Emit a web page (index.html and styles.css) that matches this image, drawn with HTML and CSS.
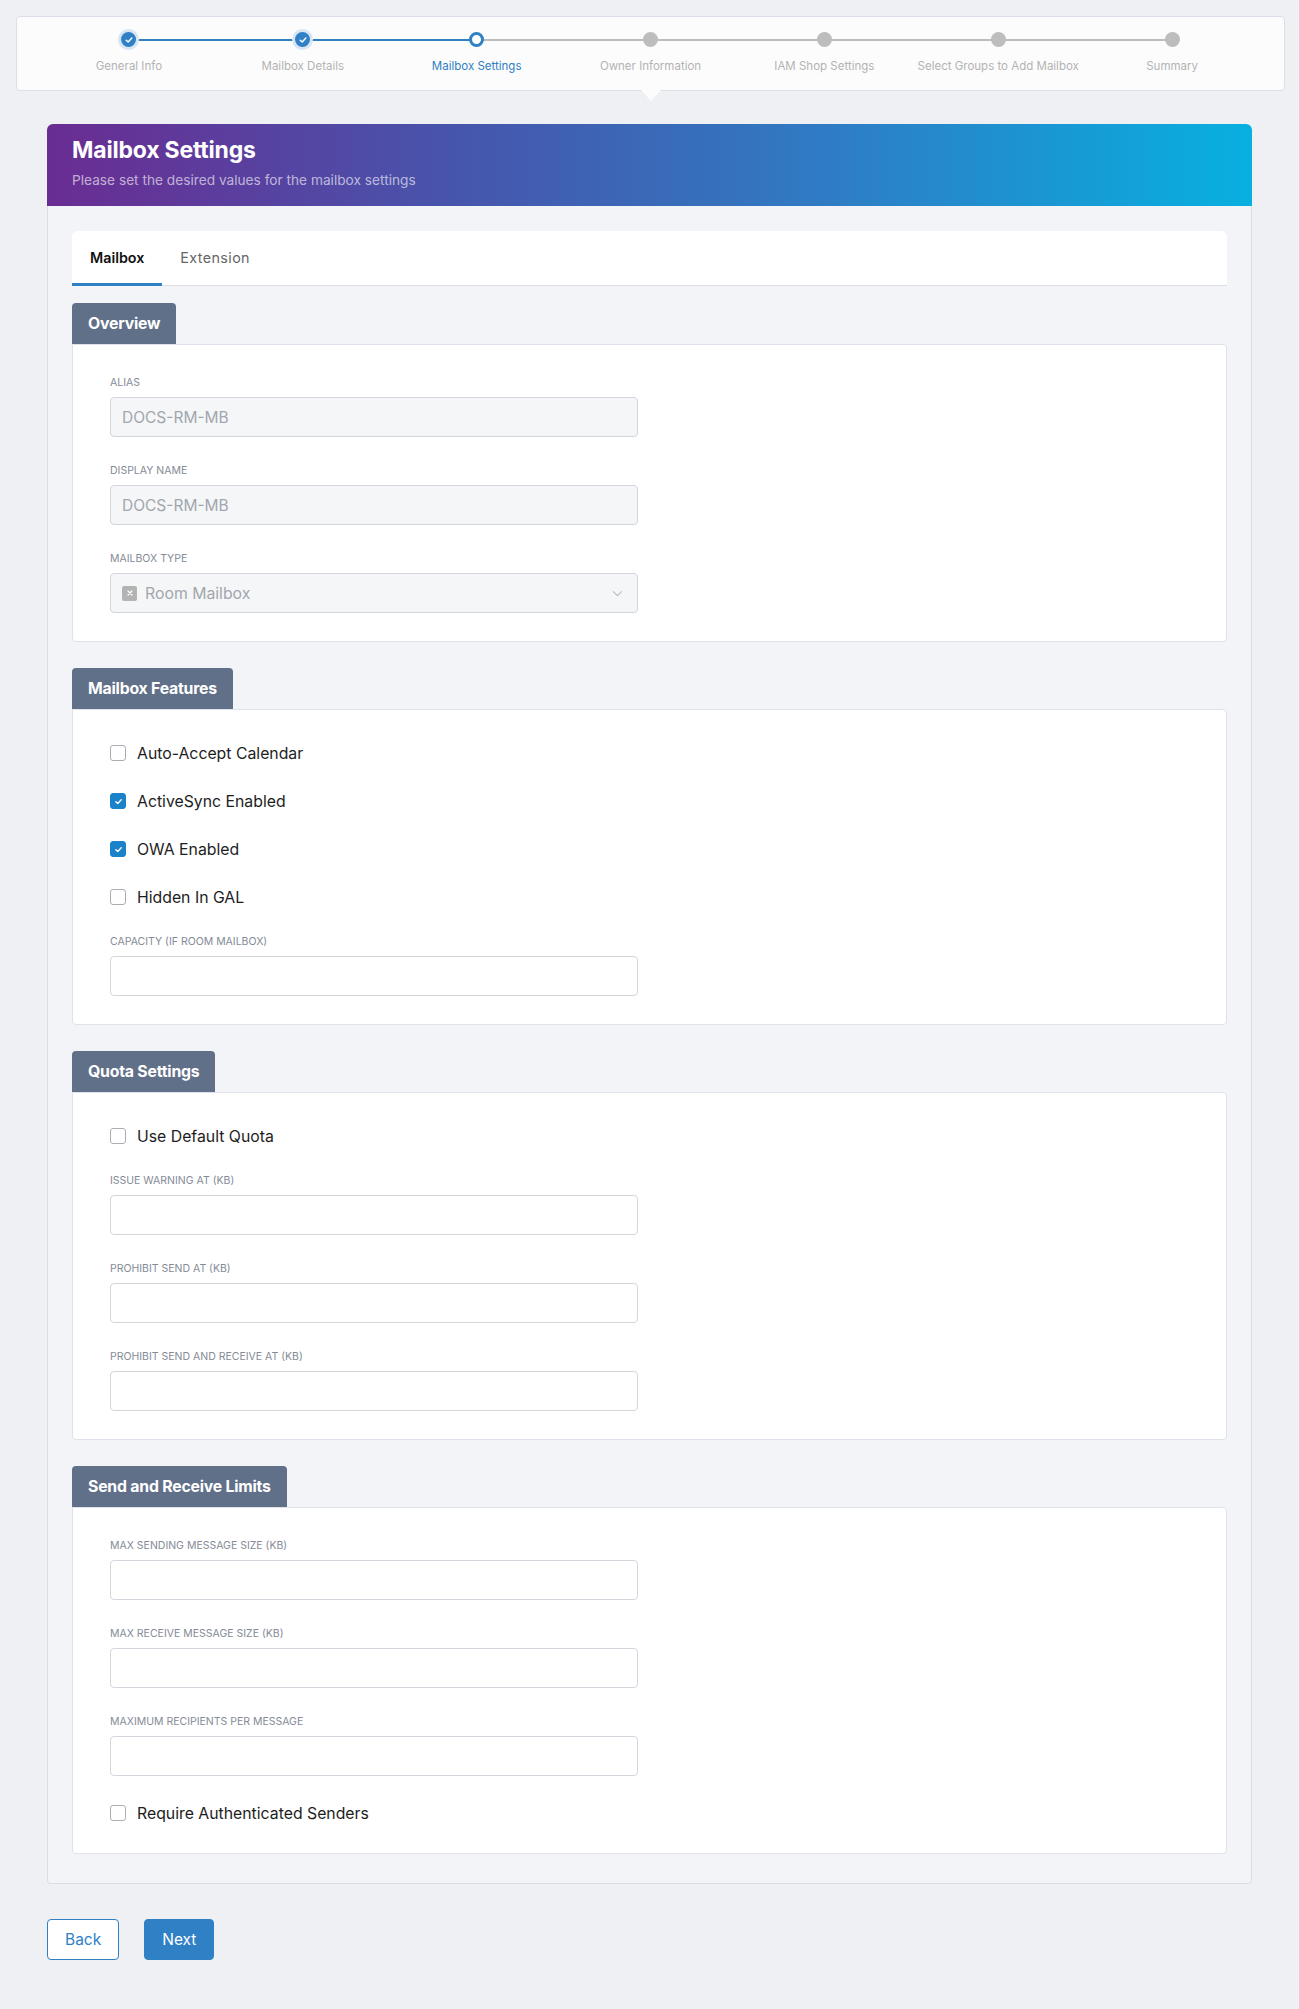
FILE: index.html
```html
<!DOCTYPE html>
<html lang="en">
<head>
    <meta charset="UTF-8">
    <meta name="viewport" content="width=device-width, initial-scale=1.0">
    <title>New Mailbox - Mailbox Settings</title>
    <link rel="stylesheet" href="styles.css">
</head>
<body>

    <!-- wizard steps -->
    <div class="stepper">
        <div class="step done">
            <span class="dot"><svg viewBox="0 0 10 10" width="8" height="8"><polyline points="1.5,5.2 4,7.5 8.5,2.5" fill="none" stroke="#fff" stroke-width="1.8" stroke-linecap="round" stroke-linejoin="round"/></svg></span>
            <span class="step-name">General Info</span>
        </div>
        <div class="step done">
            <span class="dot"><svg viewBox="0 0 10 10" width="8" height="8"><polyline points="1.5,5.2 4,7.5 8.5,2.5" fill="none" stroke="#fff" stroke-width="1.8" stroke-linecap="round" stroke-linejoin="round"/></svg></span>
            <span class="step-name">Mailbox Details</span>
        </div>
        <div class="step active">
            <span class="dot"></span>
            <span class="step-name">Mailbox Settings</span>
        </div>
        <div class="step">
            <span class="dot"></span>
            <span class="step-name">Owner Information</span>
        </div>
        <div class="step">
            <span class="dot"></span>
            <span class="step-name">IAM Shop Settings</span>
        </div>
        <div class="step">
            <span class="dot"></span>
            <span class="step-name">Select Groups to Add Mailbox</span>
        </div>
        <div class="step">
            <span class="dot"></span>
            <span class="step-name">Summary</span>
        </div>
    </div>

    <div class="panel">
        <div class="panel-head">
            <h1>Mailbox Settings</h1>
            <p>Please set the desired values for the mailbox settings</p>
        </div>

        <div class="panel-body">
            <div class="tabs">
                <span class="tab current">Mailbox</span>
                <span class="tab">Extension</span>
            </div>

            <!-- overview -->
            <div class="section">
                <div class="section-title">Overview</div>
                <div class="section-box">
                    <div class="field">
                        <label>Alias</label>
                        <input class="text" type="text" value="DOCS-RM-MB" disabled>
                    </div>
                    <div class="field">
                        <label>Display Name</label>
                        <input class="text" type="text" value="DOCS-RM-MB" disabled>
                    </div>
                    <div class="field">
                        <label>Mailbox Type</label>
                        <div class="select">
                            <span class="clear"><svg viewBox="0 0 10 10" width="8" height="8"><path d="M2.5 2.5 L7.5 7.5 M7.5 2.5 L2.5 7.5" stroke="#fff" stroke-width="1.6" stroke-linecap="round"/></svg></span>
                            <span class="select-value">Room Mailbox</span>
                            <svg class="chevron" viewBox="0 0 12 8" width="11" height="7"><polyline points="1,1.5 6,6.5 11,1.5" fill="none" stroke="#b9bdc4" stroke-width="1.2"/></svg>
                        </div>
                    </div>
                </div>
            </div>

            <!-- features -->
            <div class="section">
                <div class="section-title">Mailbox Features</div>
                <div class="section-box">
                    <div class="check"><span class="box"></span>Auto-Accept Calendar</div>
                    <div class="check"><span class="box on"><svg viewBox="0 0 10 10" width="9" height="9"><polyline points="2,5.3 4.2,7.3 8,3" fill="none" stroke="#fff" stroke-width="1.5" stroke-linecap="round" stroke-linejoin="round"/></svg></span>ActiveSync Enabled</div>
                    <div class="check"><span class="box on"><svg viewBox="0 0 10 10" width="9" height="9"><polyline points="2,5.3 4.2,7.3 8,3" fill="none" stroke="#fff" stroke-width="1.5" stroke-linecap="round" stroke-linejoin="round"/></svg></span>OWA Enabled</div>
                    <div class="check"><span class="box"></span>Hidden In GAL</div>
                    <div class="field">
                        <label>Capacity (if room mailbox)</label>
                        <input class="text" type="text">
                    </div>
                </div>
            </div>

            <!-- quota -->
            <div class="section">
                <div class="section-title">Quota Settings</div>
                <div class="section-box">
                    <div class="check"><span class="box"></span>Use Default Quota</div>
                    <div class="field">
                        <label>Issue warning at (KB)</label>
                        <input class="text" type="text">
                    </div>
                    <div class="field">
                        <label>Prohibit send at (KB)</label>
                        <input class="text" type="text">
                    </div>
                    <div class="field">
                        <label>Prohibit send and receive at (KB)</label>
                        <input class="text" type="text">
                    </div>
                </div>
            </div>

            <!-- limits -->
            <div class="section">
                <div class="section-title">Send and Receive Limits</div>
                <div class="section-box">
                    <div class="field">
                        <label>Max sending message size (KB)</label>
                        <input class="text" type="text">
                    </div>
                    <div class="field">
                        <label>Max receive message size (KB)</label>
                        <input class="text" type="text">
                    </div>
                    <div class="field">
                        <label>Maximum recipients per message</label>
                        <input class="text" type="text">
                    </div>
                    <div class="check"><span class="box"></span>Require Authenticated Senders</div>
                </div>
            </div>
        </div>
    </div>

    <div class="actions">
        <button class="btn btn-line">Back</button>
        <button class="btn btn-fill">Next</button>
    </div>

</body>
</html>
```

FILE: styles.css
```css
body{
    margin: 0;
    background: #eef0f4;
    font-family: Inter, "Noto Sans", sans-serif;
    color: #222;
}

/* ---------- wizard steps ---------- */
.stepper{
    position: relative;
    display: flex;
    margin: 16px 14px 0 16px;
    padding: 0 25px;
    height: 73px;
    background: #fcfcfd;
    border: 1px solid #dcdfe8;
    border-radius: 4px;
}
/* small pointer under the card */
.stepper::after{
    content: "";
    position: absolute;
    left: 50%;
    bottom: -11px;
    margin-left: -10px;
    border-left: 10px solid transparent;
    border-right: 10px solid transparent;
    border-top: 11px solid #fcfcfd;
}
.step{
    position: relative;
    flex: 1;
    display: flex;
    flex-direction: column;
    align-items: center;
    padding-top: 15px;
}
.step::before{
    content: "";
    position: absolute;
    top: 22px;
    left: -50%;
    right: 50%;
    height: 2px;
    background: #bdbdbd;
}
.step:first-child::before{ display: none; }
.step.done::before,
.step.active::before{ background: #2f80c5; }

.dot{
    position: relative;
    z-index: 1;
    width: 15px;
    height: 15px;
    border-radius: 50%;
    background: #bdbdbd;
    box-sizing: border-box;
    display: flex;
    align-items: center;
    justify-content: center;
}
.done .dot{
    background: #2f80c5;
    box-shadow: 0 0 0 3px #d8e6f4;
}
.active .dot{
    background: #fff;
    border: 3px solid #2f80c5;
}
.step-name{
    margin-top: 12px;
    font-size: 11.5px;
    color: #b3b3b3;
    white-space: nowrap;
}
.active .step-name{ color: #2f80c5; }

/* ---------- main panel ---------- */
.panel{
    margin: 33px 47px 0 47px;
    border-radius: 6px 6px 4px 4px;
}
.panel-head{
    padding: 11px 25px 17px;
    border-radius: 6px 6px 0 0;
    background: linear-gradient(to right, #6a2c92 0%, #4656ad 35%, #2f7cc4 65%, #07b0e0 100%);
}
.panel-head h1{
    margin: 0;
    font-size: 23px;
    line-height: 30px;
    font-weight: 700;
    color: #fff;
    letter-spacing: -0.2px;
}
.panel-head p{
    margin: 6px 0 0;
    font-size: 13.7px;
    line-height: 18px;
    color: rgba(255, 255, 255, 0.62);
}
.panel-body{
    padding: 25px 24px 29px;
    background: #f3f4f7;
    border: 1px solid #dadde7;
    border-top: 0;
    border-radius: 0 0 4px 4px;
}

/* tabs */
.tabs{
    display: flex;
    height: 54px;
    background: #fff;
    border-bottom: 1px solid #dcdfe6;
    border-radius: 6px 6px 0 0;
}
.tab{
    display: flex;
    align-items: center;
    padding: 0 18px;
    font-size: 14.3px;
    color: #666;
    letter-spacing: 0.4px;
    border-bottom: 3px solid transparent;
    margin-bottom: -1px;
}
.tab.current{
    color: #111;
    font-weight: 600;
    letter-spacing: 0;
    border-bottom-color: #2f80c5;
}

/* sections */
.section{ margin-top: 26px; }
.tabs + .section{ margin-top: 17px; }
.section-title{
    display: inline-block;
    padding: 0 16px;
    height: 41px;
    line-height: 41px;
    background: #617089;
    color: #fff;
    font-size: 15.8px;
    font-weight: 700;
    letter-spacing: -0.2px;
    border-radius: 4px 4px 0 0;
    vertical-align: top;
}
.section-box{
    padding: 31px 37px 28px;
    background: #fff;
    border: 1px solid #dfe2ea;
    border-radius: 0 4px 4px 4px;
}

.field + .field{ margin-top: 27px; }
.field label{
    display: block;
    margin-bottom: 7px;
    font-size: 10.5px;
    line-height: 14px;
    color: #858b96;
    text-transform: uppercase;
}
.text{
    display: block;
    width: 528px;
    height: 40px;
    box-sizing: border-box;
    padding: 0 11px;
    border: 1px solid #d3d6dc;
    border-radius: 4px;
    background: #fff;
    font-family: inherit;
    font-size: 15.5px;
    color: #222;
}
.text:disabled{
    background: #f5f6f8;
    color: #a2a6ad;
}

.select{
    display: flex;
    align-items: center;
    width: 528px;
    height: 40px;
    box-sizing: border-box;
    padding: 0 14px 0 11px;
    border: 1px solid #d3d6dc;
    border-radius: 4px;
    background: #f5f6f8;
}
.clear{
    width: 15px;
    height: 15px;
    border-radius: 2px;
    background: #b3b3b3;
    display: flex;
    align-items: center;
    justify-content: center;
}
.select-value{
    flex: 1;
    margin-left: 8px;
    font-size: 15.8px;
    color: #a2a6ad;
}

/* checkboxes */
.check{
    display: flex;
    align-items: center;
    height: 24px;
    font-size: 15.8px;
    color: #1d1d1d;
}
.check + .check{ margin-top: 24px; }
.check + .field{ margin-top: 26px; }
.field + .check{ margin-top: 25px; }
.box{
    width: 16px;
    height: 16px;
    box-sizing: border-box;
    margin-right: 11px;
    border: 1px solid #a9adb4;
    border-radius: 3px;
    background: #fff;
    display: flex;
    align-items: center;
    justify-content: center;
}
.box.on{
    background: #1a82c9;
    border-color: #1a82c9;
}

/* buttons */
.actions{
    display: flex;
    gap: 25px;
    margin: 35px 47px 50px;
}
.btn{
    height: 41px;
    padding: 0 17px;
    border-radius: 4px;
    font-family: inherit;
    font-size: 15.5px;
}
.btn-line{
    background: #fff;
    color: #2f80c5;
    border: 1px solid #2f80c5;
}
.btn-fill{
    background: #2f80c5;
    color: #fff;
    border: 1px solid #2f80c5;
}
```
